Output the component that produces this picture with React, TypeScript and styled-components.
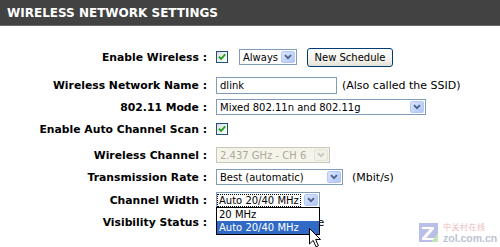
import styled, { createGlobalStyle } from 'styled-components';

const GlobalStyle = createGlobalStyle`
  html, body {
    margin: 0;
    padding: 0;
    background: #fff;
  }
  body {
    font-family: "DejaVu Sans", Verdana, sans-serif;
  }
`;

const Page = styled.div`
  position: relative;
  width: 500px;
  height: 247px;
  overflow: hidden;
  background: #fff;
`;

const TitleBar = styled.div`
  height: 26px;
  box-sizing: border-box;
  background: #414241;
  border-bottom: 1px solid #6a6b6a;
  display: flex;
  align-items: center;
  padding-left: 7px;
  color: #fff;
  font: bold 12px "DejaVu Sans", sans-serif;
`;

const Form = styled.div`
  display: flex;
  flex-direction: column;
  padding-top: 20px;
`;

const Row = styled.div<{ $space?: number }>`
  display: grid;
  grid-template-columns: 207px 1fr;
  column-gap: 9px;
  align-items: center;
  height: 22px;
  margin-top: ${p => p.$space ?? 0}px;
`;

const Label = styled.div`
  text-align: right;
  font: bold 10.8px "DejaVu Sans", sans-serif;
  color: #000;
  white-space: nowrap;
`;

const Field = styled.div`
  display: flex;
  align-items: center;
  position: relative;
  font: 10px "DejaVu Sans", sans-serif;
`;

const Check = styled.span`
  width: 12px;
  height: 12px;
  box-sizing: border-box;
  border: 1px solid #1c5180;
  background: linear-gradient(135deg, #dcdcd7, #ffffff);
  display: inline-flex;
  align-items: center;
  justify-content: center;
`;

const Radio = styled.span<{ $on?: boolean }>`
  width: 11px;
  height: 11px;
  box-sizing: border-box;
  border-radius: 50%;
  border: 1px solid #1c5180;
  background: ${p => (p.$on ? 'radial-gradient(circle, #21a121 0 2px, #fff 3px)' : 'linear-gradient(135deg, #dcdcd7, #fff)')};
  margin-right: 2px;
`;

const Select = styled.div<{ $w: number; $disabled?: boolean; $gap?: number }>`
  width: ${p => p.$w}px;
  height: 16px;
  box-sizing: border-box;
  margin-left: ${p => p.$gap ?? 0}px;
  border: 1px solid ${p => (p.$disabled ? '#c9c7ba' : '#7f9db9')};
  background: ${p => (p.$disabled ? '#f5f4ea' : '#fff')};
  color: ${p => (p.$disabled ? '#aca899' : '#000')};
  display: flex;
  align-items: center;
  padding-left: 3px;
  position: relative;
  white-space: nowrap;
`;

const FocusText = styled.span`
  outline: 1px dotted #000;
  outline-offset: 0;
  padding: 0 1px;
  margin-left: -2px;
  line-height: 11px;
`;

const ArrowButton = styled.span<{ $disabled?: boolean }>`
  margin-left: auto;
  width: 14px;
  height: 12px;
  margin-right: 1px;
  box-sizing: border-box;
  border: 1px solid ${p => (p.$disabled ? '#e6e4d8' : '#b4c8f6')};
  border-radius: 2px;
  background: ${p =>
    p.$disabled ? '#f2f1e8' : 'linear-gradient(135deg, #dbe5fd 0%, #c1d3fb 60%, #b0c5f5 100%)'};
  display: flex;
  align-items: center;
  justify-content: center;
`;

const TextInput = styled.div<{ $w: number }>`
  width: ${p => p.$w}px;
  height: 17px;
  box-sizing: border-box;
  border: 1px solid #7f9db9;
  background: #fff;
  display: flex;
  align-items: center;
  padding-left: 3px;
`;

const Button = styled.div<{ $gap?: number }>`
  margin-left: ${p => p.$gap ?? 0}px;
  width: 86px;
  height: 19px;
  box-sizing: border-box;
  border: 1px solid #003c74;
  border-radius: 3px;
  background: linear-gradient(#ffffff 0%, #f4f3ee 60%, #e3e1d5 100%);
  display: flex;
  align-items: center;
  justify-content: center;
`;

const Note = styled.span<{ $gap: number }>`
  margin-left: ${p => p.$gap}px;
  font: 11px "DejaVu Sans", sans-serif;
  white-space: nowrap;
`;

const OptionText = styled.span<{ $gap?: number }>`
  margin-right: ${p => p.$gap ?? 0}px;
  font: 11px "DejaVu Sans", sans-serif;
`;

const DropList = styled.div`
  position: absolute;
  left: -1px;
  top: 14px;
  width: 104px;
  box-sizing: border-box;
  border: 1px solid #000;
  background: #fff;
  z-index: 5;
`;

const DropItem = styled.div<{ $selected?: boolean }>`
  height: 13px;
  line-height: 13px;
  padding-left: 2px;
  background: ${p => (p.$selected ? '#316ac5' : '#fff')};
  color: ${p => (p.$selected ? '#fff' : '#000')};
`;

const Cursor = styled.svg`
  position: absolute;
  left: 92px;
  top: 20px;
  z-index: 6;
`;

const Watermark = styled.div`
  position: absolute;
  left: 419px;
  top: 221px;
  display: flex;
  align-items: center;
  gap: 5px;
  opacity: 0.6;
`;

const MarkText = styled.div`
  display: flex;
  flex-direction: column;
  line-height: 1;
`;

const MarkCn = styled.span`
  font: 8px "Noto Sans CJK SC", sans-serif;
  color: #e48d8d;
  letter-spacing: 0.5px;
`;

const MarkEn = styled.span`
  font: bold 10.5px "Liberation Sans", Arial, sans-serif;
  color: #8e9ab8;
`;

const Chevron = ({ disabled }: { disabled?: boolean }) => (
  <ArrowButton $disabled={disabled}>
    <svg width="8" height="6" viewBox="0 0 8 6">
      <path
        d="M1 1.2 L4 4.2 L7 1.2"
        fill="none"
        stroke={disabled ? '#c9c7ba' : '#4d6185'}
        strokeWidth="1.8"
      />
    </svg>
  </ArrowButton>
);

const CheckBox = () => (
  <Check>
    <svg width="8" height="8" viewBox="0 0 7 7">
      <path d="M0.8 3.3 L2.7 5.2 L6.3 1.3" fill="none" stroke="#21a121" strokeWidth="1.6" />
    </svg>
  </Check>
);

const App = () => {
  return (
    <Page>
      <GlobalStyle />
      <TitleBar>WIRELESS NETWORK SETTINGS</TitleBar>
      <Form>
        <Row>
          <Label>Enable Wireless :</Label>
          <Field>
            <CheckBox />
            <Select $w={58} $gap={11}>
              Always
              <Chevron />
            </Select>
            <Button $gap={10}>New Schedule</Button>
          </Field>
        </Row>
        <Row $space={6}>
          <Label>Wireless Network Name :</Label>
          <Field>
            <TextInput $w={121}>dlink</TextInput>
            <Note $gap={5}>(Also called the SSID)</Note>
          </Field>
        </Row>
        <Row>
          <Label>802.11 Mode :</Label>
          <Field>
            <Select $w={210}>
              Mixed 802.11n and 802.11g
              <Chevron />
            </Select>
          </Field>
        </Row>
        <Row>
          <Label>Enable Auto Channel Scan :</Label>
          <Field>
            <CheckBox />
          </Field>
        </Row>
        <Row $space={4}>
          <Label>Wireless Channel :</Label>
          <Field>
            <Select $w={114} $disabled>
              2.437 GHz - CH 6
              <Chevron disabled />
            </Select>
          </Field>
        </Row>
        <Row>
          <Label>Transmission Rate :</Label>
          <Field>
            <Select $w={127}>
              Best (automatic)
              <Chevron />
            </Select>
            <Note $gap={9}>(Mbit/s)</Note>
          </Field>
        </Row>
        <Row $space={1}>
          <Label>Channel Width :</Label>
          <Field>
            <Select $w={104}>
              <FocusText>Auto 20/40 MHz</FocusText>
              <Chevron />
              <DropList>
                <DropItem>20 MHz</DropItem>
                <DropItem $selected>Auto 20/40 MHz</DropItem>
                <Cursor width="13" height="20" viewBox="0 0 13 20">
                  <path
                    d="M0.5 0.5 L0.5 16 L4.2 12.4 L7 18.8 L9.4 17.8 L6.7 11.5 L11.5 11.5 Z"
                    fill="#fff"
                    stroke="#000"
                    strokeWidth="1"
                  />
                </Cursor>
              </DropList>
            </Select>
          </Field>
        </Row>
        <Row>
          <Label>Visibility Status :</Label>
          <Field>
            <Radio $on />
            <OptionText $gap={1}>Visible</OptionText>
            <Radio />
            <OptionText>Invisible</OptionText>
          </Field>
        </Row>
      </Form>
      <Watermark>
        <svg width="19" height="19" viewBox="0 0 19 19">
          <rect x="0" y="0" width="19" height="19" fill="#8c96d8" />
          <path d="M3 4 L15 4 L15 6 L7 15 L16 15 L16 17 L3 17 L3 15 L11 6 L3 6 Z" fill="#fff" />
          <path d="M19 10 L19 19 L12 19 Z" fill="#9fd08a" />
        </svg>
        <MarkText>
          <MarkCn>中关村在线</MarkCn>
          <MarkEn>zol.com.cn</MarkEn>
        </MarkText>
      </Watermark>
    </Page>
  );
};

export default App;
